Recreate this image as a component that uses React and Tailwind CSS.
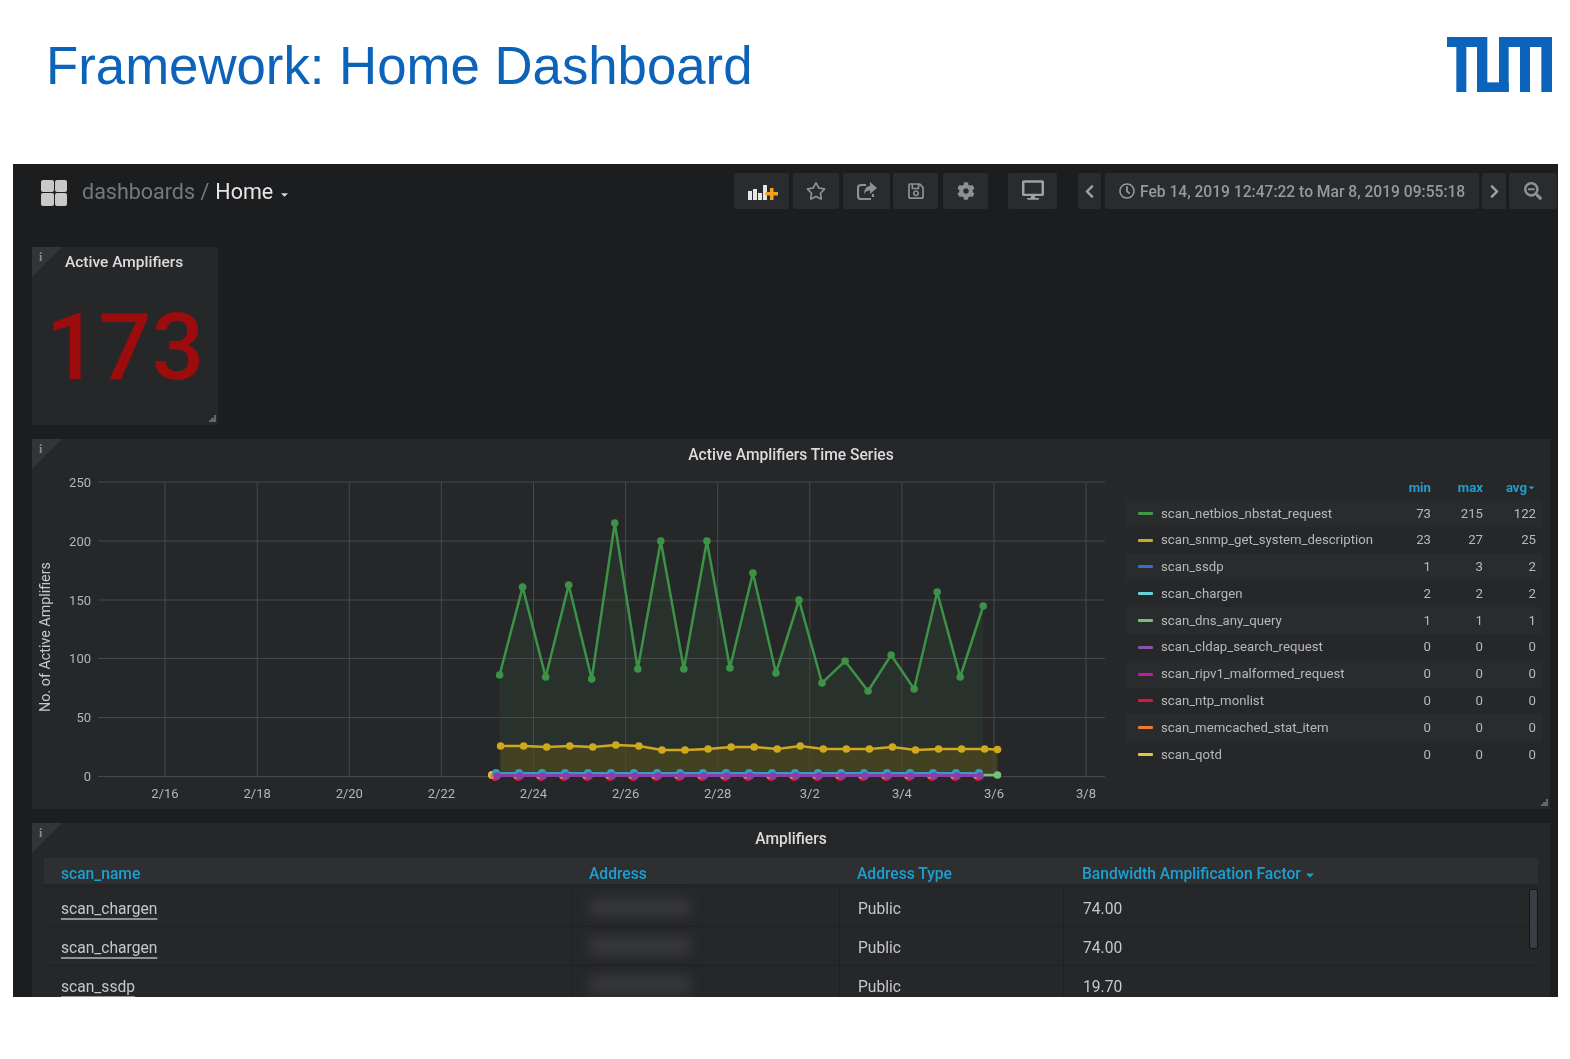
import { FaRegStar, FaRegSave, FaCog, FaDesktop, FaChevronLeft, FaChevronRight, FaRegClock, FaSearchMinus, FaCaretDown } from 'react-icons/fa'

// ─── Data ────────────────────────────────────────────────────────────────────

const legend = [
  { name: 'scan_netbios_nbstat_request', color: 'bg-[#3f9a49]', min: 73, max: 215, avg: 122 },
  { name: 'scan_snmp_get_system_description', color: 'bg-[#d0a81e]', min: 23, max: 27, avg: 25 },
  { name: 'scan_ssdp', color: 'bg-[#2f72c4]', min: 1, max: 3, avg: 2 },
  { name: 'scan_chargen', color: 'bg-[#62d3da]', min: 2, max: 2, avg: 2 },
  { name: 'scan_dns_any_query', color: 'bg-[#74c076]', min: 1, max: 1, avg: 1 },
  { name: 'scan_cldap_search_request', color: 'bg-[#8a55a8]', min: 0, max: 0, avg: 0 },
  { name: 'scan_ripv1_malformed_request', color: 'bg-[#c915a9]', min: 0, max: 0, avg: 0 },
  { name: 'scan_ntp_monlist', color: 'bg-[#e0143f]', min: 0, max: 0, avg: 0 },
  { name: 'scan_memcached_stat_item', color: 'bg-[#ee7b38]', min: 0, max: 0, avg: 0 },
  { name: 'scan_qotd', color: 'bg-[#e6c43f]', min: 0, max: 0, avg: 0 },
]

const rows = [
  { name: 'scan_chargen', type: 'Public', factor: '74.00' },
  { name: 'scan_chargen', type: 'Public', factor: '74.00' },
  { name: 'scan_ssdp', type: 'Public', factor: '19.70' },
]

const greenY = [675, 587, 677, 585, 679, 523, 669, 541, 669, 541, 668, 573, 673, 600, 683, 661, 691, 655, 689, 592, 677, 606]
const yellowY = [746, 746, 747, 746, 747, 745, 746, 750, 750, 749, 747, 747, 749, 746, 749, 749, 749, 747, 750, 749, 749, 749]

const green = greenY.map((y, i) => [499.6 + 23.03 * i, y])
const yellow = [...yellowY.map((y, i) => [500.6 + 23.05 * i, y]), [997.5, 749.5]]
const baseX = Array.from({ length: 22 }, (_, i) => 496 + 23 * i)

const gridX = [165, 257.2, 349.3, 441.4, 533.5, 625.6, 717.7, 809.8, 901.9, 994, 1086]
const gridY = [[250, 482], [200, 541], [150, 600], [100, 658.5], [50, 717.5], [0, 776.5]]
const dates = ['2/16', '2/18', '2/20', '2/22', '2/24', '2/26', '2/28', '3/2', '3/4', '3/6', '3/8']

const pts = (list) => list.map(p => p.join(',')).join(' ')

// ─── Small pieces ────────────────────────────────────────────────────────────

function TumLogo() {
  return (
    <svg viewBox="142 50 315 165" className="w-[105px] h-[55px]" fill="#0b63ba">
      <path d="M142 50H263V215H232V80H200V215H170V80H142Z" />
      <path d="M232 186H327V215H232Z" />
      <path d="M298 50H457V215H425V80H391V215H361V80H327V215H298Z" />
    </svg>
  )
}

function AddPanelIcon() {
  return (
    <svg viewBox="0 0 30 16" className="w-[30px] h-[16px] ml-[2px] mt-[1px]">
      <path fill="#e4e4e4" d="M0 7h4v9H0zM5 5h4v11H5zM10 9h4v7h-4zM15 1h4v15h-4z" />
      <path fill="#f2a01f" d="M22 4h3.500v4H30v3.500h-4.500V16H22v-4.500h-4.500V8H22z" />
    </svg>
  )
}

function ShareIcon() {
  return (
    <svg viewBox="0 0 20 18" className="w-[20px] h-[18px]" fill="none" stroke="currentColor">
      <path strokeWidth="2.200" d="M14 17H4a3 3 0 0 1-3-3V6a3 3 0 0 1 3-3h5M16 12v3" />
      <path fill="currentColor" stroke="none" d="M13 0l7 6-7 6V8.500c-3 0-5 1-6 4 0-5 2-8 6-8.500z" />
    </svg>
  )
}

function InfoCorner() {
  return (
    <>
      <div className="absolute left-0 top-0 w-[30px] h-[30px] bg-[#333436] [clip-path:polygon(0_0,100%_0,0_100%)]" />
      <span className="absolute left-[7px] top-[2px] text-[12px] leading-[16px] font-bold text-[#8a8b8d] font-['Liberation_Serif',serif]">i</span>
    </>
  )
}

function ResizeHandle() {
  return (
    <svg viewBox="0 0 7 7" className="absolute right-[2px] bottom-[3px] w-[7px] h-[7px]" fill="#66676a">
      <path d="M5 0h2v7H0V5h2V3h3z" />
    </svg>
  )
}

function ToolButton({ className, children }) {
  return (
    <div className={`h-[36px] bg-[#2a2b2d] rounded-[2px] flex items-center justify-center text-[#8f9092] ${className}`}>
      {children}
    </div>
  )
}

// ─── Graph ───────────────────────────────────────────────────────────────────

function Chart() {
  return (
    <svg viewBox="32 469 1085 335" className="w-[1085px] h-[335px] shrink-0 font-['Roboto',sans-serif]">
      <polygon points={`${pts(green)} 983,776 499.600,776`} fill="#2b362f" opacity="0.75" />
      <polygon points={`${pts(yellow)} 997.500,776 500.600,776`} fill="#4d4a1f" opacity="0.7" />

      {gridX.map(x => <line key={x} x1={x} x2={x} y1="482" y2="776" stroke="#47484a" strokeWidth="1" />)}
      {gridY.map(([label, y]) => (
        <g key={label}>
          <line x1="98" x2="1105" y1={y} y2={y} stroke="#47484a" strokeWidth="1" />
          <text x="91" y={y + 4.500} textAnchor="end" fontSize="13" fill="#b5b6b8">{label}</text>
        </g>
      ))}
      {dates.map((d, i) => (
        <text key={d} x={gridX[i]} y="798" textAnchor="middle" fontSize="13" fill="#b5b6b8">{d}</text>
      ))}
      <text transform="translate(50 637) rotate(-90)" textAnchor="middle" fontSize="14.300" fill="#c8c9ca">No. of Active Amplifiers</text>

      <polyline points={pts(green)} fill="none" stroke="#3c9347" strokeWidth="2.500" />
      {green.map(([x, y]) => <circle key={x} cx={x} cy={y} r="3.800" fill="#3c9347" />)}

      <polyline points={pts(yellow)} fill="none" stroke="#d0a81e" strokeWidth="2.500" />
      {yellow.map(([x, y]) => <circle key={x} cx={x} cy={y} r="3.800" fill="#d0a81e" />)}

      <line x1="496" x2="998" y1="775" y2="775" stroke="#74c076" strokeWidth="2.500" />
      <circle cx="997.500" cy="775" r="3.800" fill="#74c076" />
      <circle cx="492" cy="775" r="4" fill="#e6c43f" />
      {baseX.map(x => (
        <g key={x}>
          <circle cx={x - 1} cy="777.500" r="3.500" fill="#e0143f" />
          <circle cx={x - 3} cy="776" r="3" fill="#ee7b38" />
          <circle cx={x} cy="773" r="4" fill="#2f9fc4" />
        </g>
      ))}
      <line x1="496" x2="979" y1="773.500" y2="773.500" stroke="#2f9fc4" strokeWidth="3" />
      {baseX.map(x => <circle key={x} cx={x + 1} cy="776" r="3.800" fill="#8a3fa8" />)}
      <line x1="496" x2="983" y1="775.500" y2="775.500" stroke="#8a3fa8" strokeWidth="3" />
    </svg>
  )
}

function Legend() {
  return (
    <div className="w-[416px] ml-[9px] pt-[8px] text-[13.200px]">
      <div className="flex h-[21px] mb-[2px] items-center justify-end pr-[6px] text-[#1e9fd0] font-bold">
        <span className="w-[52px] text-right">min</span>
        <span className="w-[52px] text-right">max</span>
        <span className="w-[53px] text-right flex items-center justify-end">avg<FaCaretDown size={9} /></span>
      </div>
      {legend.map((item, i) => (
        <div key={item.name} className={`flex items-center h-[26.800px] pr-[6px] text-[#b7b8ba] ${i % 2 === 0 ? 'bg-[#2a2b2d]' : ''}`}>
          <span className={`w-[15px] h-[3px] ml-[12px] rounded-[1px] ${item.color}`} />
          <span className="ml-[8px] flex-1 whitespace-nowrap">{item.name}</span>
          <span className="w-[52px] text-right">{item.min}</span>
          <span className="w-[52px] text-right">{item.max}</span>
          <span className="w-[53px] text-right">{item.avg}</span>
        </div>
      ))}
    </div>
  )
}

// ─── Table ───────────────────────────────────────────────────────────────────

function AmplifierTable() {
  const cols = 'grid grid-cols-[527px_268px_224px_1fr]'
  return (
    <div className="ml-[12px] mr-[12px] relative">
      <div className={`${cols} h-[26px] pt-[5px] items-center bg-[#2e2f31] text-[15.600px] font-medium text-[#1e9fd0]`}>
        <span className="pl-[17px]">scan_name</span>
        <span className="pl-[18px]">Address</span>
        <span className="pl-[18px]">Address Type</span>
        <span className="pl-[19px] flex items-center gap-[3px]">Bandwidth Amplification Factor <FaCaretDown size={12} /></span>
      </div>
      <div className="h-[4px] bg-[#1f2022]/40" />
      {rows.map((row, i) => (
        <div key={i} className={`${cols} h-[39px] items-stretch text-[15.600px] text-[#c6c7c9] border-b border-[#1f2022]`}>
          <div className="pl-[17px] pt-[5px] flex items-center">
            <span className="underline decoration-2 underline-offset-[4px] decoration-[#8f9092]">{row.name}</span>
          </div>
          <div className="border-l border-[#1f2022] pl-[18px] flex items-center">
            <div className="w-[100px] h-[18px] bg-[#37383a] blur-[6px]" />
          </div>
          <div className="border-l border-[#1f2022] pl-[18px] pt-[5px] flex items-center">{row.type}</div>
          <div className="border-l border-[#1f2022] pl-[19px] pt-[5px] flex items-center">{row.factor}</div>
        </div>
      ))}
      <div className="absolute right-0 top-[31px] w-[9px] h-[60px] rounded-[2px] bg-[#3b3c44] border border-[#131416]" />
    </div>
  )
}

// ─── Page ────────────────────────────────────────────────────────────────────

export default function App() {
  return (
    <div className="w-[1570px] h-[1059px] bg-white overflow-hidden font-['Roboto',sans-serif]">
      <header className="h-[164px] pl-[46px] pr-[18px] pt-[37px] flex justify-between items-start">
        <h1 className="text-[52.750px] leading-[58px] text-[#0b63ba] font-['Liberation_Sans',sans-serif]">Framework: Home Dashboard</h1>
        <TumLogo />
      </header>

      <main className="ml-[13px] w-[1545px] h-[833px] overflow-hidden bg-[#1c1d1f] blur-[0.6px]">
        {/* Toolbar */}
        <div className="h-[83px] pt-[9px] pl-[28px] pr-[1px] flex items-start">
          <div className="flex items-center h-[36px] pt-[3px]">
            <div className="grid grid-cols-2 gap-[1px] w-[26px] h-[26px]">
              <span className="bg-[#c8c8c8] rounded-[2px]" />
              <span className="bg-[#c8c8c8] rounded-[2px]" />
              <span className="bg-[#c8c8c8] rounded-[2px]" />
              <span className="bg-[#c8c8c8] rounded-[2px]" />
            </div>
            <span className="ml-[15px] text-[21.500px] text-[#77787a]">dashboards /</span>
            <span className="ml-[6px] text-[21.500px] text-[#e6e6e7]">Home</span>
            <FaCaretDown size={11} className="ml-[6px] mt-[4px] text-[#d8d8d8]" />
          </div>
          <div className="ml-auto flex items-center">
            <ToolButton className="w-[55px]"><AddPanelIcon /></ToolButton>
            <ToolButton className="w-[46px] ml-[4px]"><FaRegStar size={20} /></ToolButton>
            <ToolButton className="w-[47px] ml-[4px]"><ShareIcon /></ToolButton>
            <ToolButton className="w-[45px] ml-[3px]"><FaRegSave size={18} /></ToolButton>
            <ToolButton className="w-[45px] ml-[5px]"><FaCog size={18} /></ToolButton>
            <ToolButton className="w-[49px] ml-[20px]"><FaDesktop size={22} className="-mt-[3px] text-[#a0a1a3]" /></ToolButton>
            <ToolButton className="w-[23px] ml-[21px]"><FaChevronLeft size={15} className="text-[#a0a1a3]" /></ToolButton>
            <ToolButton className="w-[374px] ml-[4px] gap-[5px] justify-start pl-[14px] text-[15.600px] font-medium text-[#98999b]">
              <FaRegClock size={16} />
              <span className="pt-[3px]">Feb 14, 2019 12:47:22 to Mar 8, 2019 09:55:18</span>
            </ToolButton>
            <ToolButton className="w-[24px] ml-[3px]"><FaChevronRight size={15} className="text-[#a0a1a3]" /></ToolButton>
            <ToolButton className="w-[48px] ml-[3px]"><FaSearchMinus size={18} /></ToolButton>
          </div>
        </div>

        <div className="pl-[19px] pr-[8px] flex flex-col gap-[14px]">
          {/* Stat */}
          <section className="relative w-[186px] h-[178px] bg-[#262729]">
            <InfoCorner />
            <div className="pl-[33px] pt-[5px] text-[15.500px] leading-[20px] font-medium text-[#dcdcdd]">Active Amplifiers</div>
            <div className="mt-[22px] text-center text-[93px] leading-[108px] font-medium text-[#9c0c0c]">173</div>
            <ResizeHandle />
          </section>

          {/* Time series */}
          <section className="relative h-[370px] bg-[#262729]">
            <InfoCorner />
            <div className="h-[30px] pt-[3px] flex items-center justify-center text-[15.600px] font-medium text-[#dcdcdd]">Active Amplifiers Time Series</div>
            <div className="flex">
              <Chart />
              <Legend />
            </div>
            <ResizeHandle />
          </section>

          {/* Table */}
          <section className="relative h-[300px] bg-[#262729]">
            <InfoCorner />
            <div className="h-[29px] pt-[4px] mb-[6px] flex items-center justify-center text-[15.600px] font-medium text-[#dcdcdd]">Amplifiers</div>
            <AmplifierTable />
          </section>
        </div>
      </main>
    </div>
  )
}
